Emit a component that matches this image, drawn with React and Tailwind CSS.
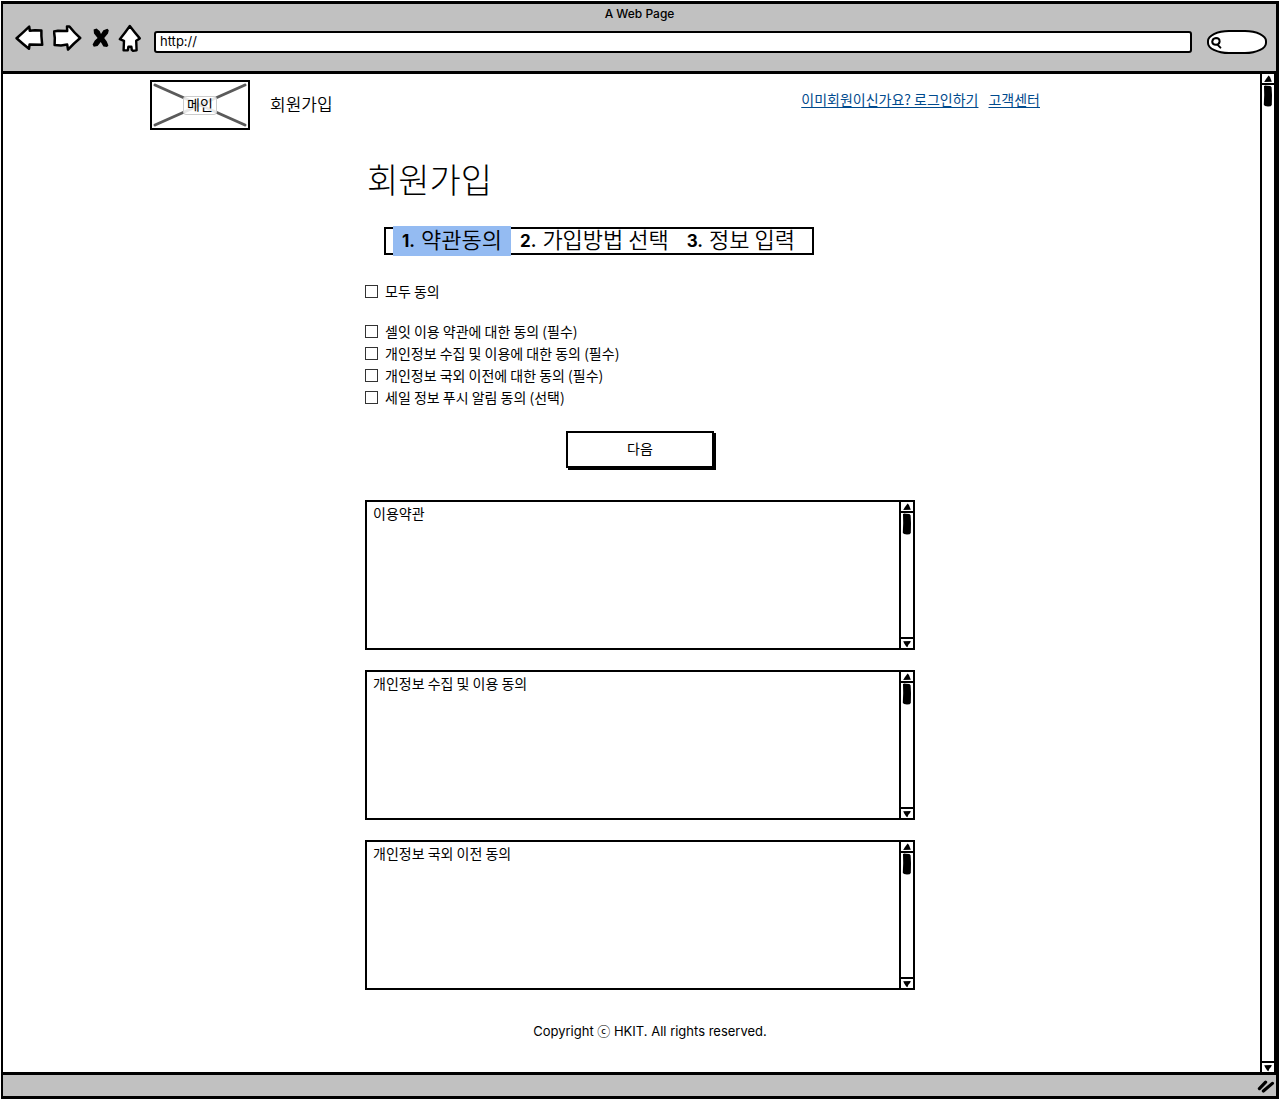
import React from "react";

const LATIN = "font-[Inter,'Noto_Sans_CJK_KR',sans-serif]";
const KOREAN = "font-['Noto_Sans_CJK_KR',sans-serif]";

const steps = [
  { no: "1.", label: "약관동의", current: true },
  { no: "2.", label: "가입방법 선택", current: false },
  { no: "3.", label: "정보 입력", current: false },
];

const agreements = [
  "셀잇 이용 약관에 대한 동의 (필수)",
  "개인정보 수집 및 이용에 대한 동의 (필수)",
  "개인정보 국외 이전에 대한 동의 (필수)",
  "세일 정보 푸시 알림 동의 (선택)",
];

const terms = ["이용약관", "개인정보 수집 및 이용 동의", "개인정보 국외 이전 동의"];

function NavButton({ label, className, children }) {
  return (
    <button type="button" aria-label={label} className={className}>
      {children}
    </button>
  );
}

function Scrollbar({ className }) {
  return (
    <div aria-hidden="true" className={`flex shrink-0 flex-col bg-white ${className}`}>
      <div className="flex h-[11px] items-center justify-center border-b-2 border-black">
        <svg width="8" height="8" viewBox="0 0 8 8">
          <path d="M4.6 0.6 6 2 7.8 6.8 0.2 7 2 4Z" />
        </svg>
      </div>
      <svg className="mx-auto" width="10" height="23" viewBox="0 0 10 23">
        <path d="M1 1 2.6 0.4 4 0.8 7.4 1 8.6 2.2 9 10 8.8 20 7.6 21.2 5 21.6 2 21 0.8 19.8 1.2 10Z" />
      </svg>
      <div className="mt-auto flex h-[11px] items-center justify-center border-t-2 border-black">
        <svg width="8" height="8" viewBox="0 0 8 8">
          <path d="M0.2 1.2 7.8 1 7 3 5.4 4.8 4.4 7.2 3.2 6.4 1.4 3.8Z" />
        </svg>
      </div>
    </div>
  );
}

function CheckRow({ label }) {
  return (
    <label className="flex h-[22px] items-center gap-[7px] text-sm">
      <input
        type="checkbox"
        className="size-[13px] shrink-0 appearance-none border border-[#333] bg-white checked:bg-[#333]"
      />
      {label}
    </label>
  );
}

function BrowserBar() {
  return (
    <header className="border-b-[3px] border-black bg-[#c1c1c1] pb-[18px]">
      <h1 className={`pt-px text-center text-[12px] leading-[18px] font-medium ${LATIN}`}>A Web Page</h1>
      <div className="flex h-[30px] items-center pr-[9px] pl-3">
        <NavButton label="Back" className="mr-2">
          <svg width="30" height="28" viewBox="0 0 30 28" fill="white" stroke="black" strokeWidth="2.5" strokeLinejoin="round">
            <path d="M1.6 14.2Q8 8.6 14.2 2.6L14.8 6.8 20 6.2 26.4 6.6 26.4 12 27.2 20.8 14.6 20.4 14 24.8Q8 20 1.6 14.2Z" />
          </svg>
        </NavButton>
        <NavButton label="Forward" className="mr-2">
          <svg width="30" height="28" viewBox="0 0 30 28" fill="white" stroke="black" strokeWidth="2.5" strokeLinejoin="round">
            <path d="M1 7.6 5 6.8 14.2 7 14 2.6 16.4 2.6Q21 8.6 27.2 14 21 19.2 15 25.6L14.2 20.6 8 21.4 1.6 21 1.8 14Z" />
          </svg>
        </NavButton>
        <NavButton label="Stop" className="mr-[7px]">
          <svg width="20" height="24" viewBox="0 0 20 24" fill="black">
            <path d="M2.6 3.4 5.6 2.6 8.6 5 10 8 12.4 4.2 16.4 2.8 17.8 4.2 17 7.6 13.2 12 15.8 15.4 17.4 19.4 16 21 12.4 20.4 9.8 16 6.6 20 2.8 20.8 1.6 18.6 3.8 14.6 6.6 12 3 7.4Z" />
          </svg>
        </NavButton>
        <NavButton label="Home" className="mr-3">
          <svg width="24" height="29" viewBox="0 0 24 29" fill="white" stroke="black" strokeWidth="2.4" strokeLinejoin="round">
            <path d="M11.8 2Q16.4 8.2 21.8 14.4L18.2 16.8 18.6 26.4 15 26.8 13.8 25.8 13.4 22.8 10.4 22.8 9.8 26.4 5.6 26.2 6 16.8 1.8 15.2Q7.4 8.4 11.8 2Z" />
          </svg>
        </NavButton>
        <input
          type="text"
          aria-label="Address"
          defaultValue="http://"
          className={`mt-2 h-[22px] min-w-0 flex-1 rounded-[3px] border-2 border-black bg-white px-1 pb-[3px] text-[13px] ${LATIN}`}
        />
        <div className="relative mt-2 ml-[15px] shrink-0">
          <input
            type="search"
            aria-label="Search"
            className="block h-6 w-[60px] rounded-[22px/11px] border-2 border-black bg-white pr-2 pl-[18px] text-xs"
          />
          <svg className="absolute top-[7px] left-[4px]" width="12" height="12" viewBox="0 0 12 12" fill="none" stroke="black" strokeWidth="2" strokeLinecap="round">
            <path d="M1.2 4.8Q1.6 1.2 5 1 8.8 1 8.6 4.8 8 7.8 5 7.8 1.4 7.8 1.2 4.8ZM6.4 7.6 9.4 10.6" />
          </svg>
        </div>
      </div>
    </header>
  );
}

export default function App() {
  return (
    <div className={`min-h-screen bg-white p-px text-black ${KOREAN}`}>
      <div className="flex min-h-[calc(100vh-2px)] flex-col border-[3px] border-l-2 border-black">
        <BrowserBar />

        <div className="flex flex-1">
          <div className="min-w-0 flex-1 pl-[17px]">
            <div className="mx-auto flex max-w-[980px] pt-[6px] pr-[90px]">
              <div className="relative flex h-[50px] w-[100px] shrink-0 items-center justify-center border-2 border-black">
                <svg className="absolute inset-0 h-full w-full" viewBox="0 0 96 46" stroke="#5a5a5a" strokeWidth="3" strokeLinecap="round">
                  <path d="M3 3 93 43M93 3 3 43" />
                </svg>
                <a href="#main" className="relative rounded-[3px] border border-[#ccc] bg-white/85 px-[3px] pb-[2px] text-sm leading-[15px]">
                  메인
                </a>
              </div>
              <p className="mt-3 ml-5 text-[17px] leading-6 font-[350]">회원가입</p>
              <nav className="mt-[9px] ml-auto flex gap-[10px] text-sm leading-5 text-[#004a8d]">
                <a href="#login" className="underline underline-offset-2">이미회원이신가요? 로그인하기</a>
                <a href="#help" className="underline underline-offset-2">고객센터</a>
              </nav>
            </div>

            <main id="main" className="mx-auto w-full max-w-[550px]">
              <h2 className="mt-[26px] pl-[2px] text-[34px] leading-[46px] font-light">회원가입</h2>

              <ol className="mt-[25px] ml-[19px] flex h-7 w-[430px] items-center border-2 border-black pl-[7px] text-[22px] leading-6 font-[350]">
                {steps.map((step) => (
                  <li
                    key={step.no}
                    className={
                      step.current
                        ? "flex h-[30px] items-center bg-[#94bbf2] px-[9px]"
                        : "flex h-[30px] items-center px-[9px]"
                    }
                  >
                    <span className={`mr-[6px] text-[17px] font-bold ${LATIN}`}>{step.no}</span>
                    <span className="pb-[6px]">{step.label}</span>
                  </li>
                ))}
              </ol>

              <form>
                <div className="mt-[25px]">
                  <CheckRow label="모두 동의" />
                </div>
                <div className="mt-[18px]">
                  {agreements.map((text) => (
                    <CheckRow key={text} label={text} />
                  ))}
                </div>
                <button
                  type="button"
                  className="mx-auto mt-[23px] block h-[37px] w-[148px] border-2 border-black bg-white pb-[3px] text-sm shadow-[2px_2px_0_black]"
                >
                  다음
                </button>
                <div className="mt-8 flex flex-col gap-5">
                  {terms.map((text) => (
                    <div key={text} className="flex h-[150px] border-2 border-black">
                      <textarea
                        readOnly
                        aria-label={text}
                        defaultValue={text}
                        className="min-w-0 flex-1 resize-none px-[6px] text-sm leading-[22px]"
                      />
                      <Scrollbar className="w-[14px] border-l-2 border-black" />
                    </div>
                  ))}
                </div>
              </form>

              <p className={`mt-[31px] mb-6 ml-5 text-center text-[13px] leading-5 ${LATIN}`}>
                Copyright ⓒ HKIT. All rights reserved.
              </p>
            </main>
          </div>
          <Scrollbar className="w-4 border-x-2 border-black" />
        </div>

        <footer className="flex h-6 items-center justify-end border-t-[3px] border-black bg-[#c1c1c1] pr-px">
          <svg width="18" height="16" viewBox="0 0 18 16" fill="none" stroke="black" strokeWidth="3.2" strokeLinecap="round">
            <path d="M2.4 10.6 8.6 4.2M6.4 13 15.4 5.4" />
          </svg>
        </footer>
      </div>
    </div>
  );
}
